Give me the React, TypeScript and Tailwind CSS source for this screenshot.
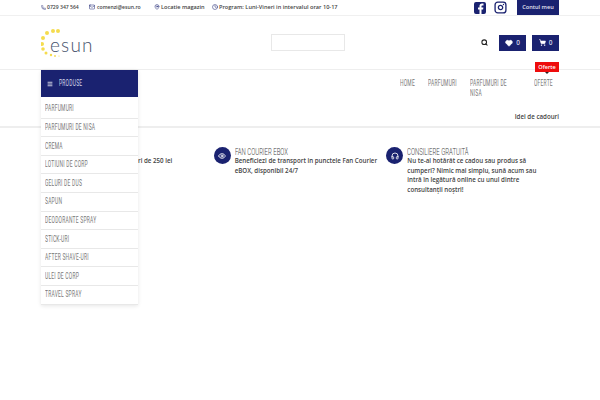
import { Search, Heart, ShoppingCart, Phone, Mail, MapPin, Clock, Menu, Eye, Headphones, Instagram } from "lucide-react";

const sidebarItems = [
  "Parfumuri",
  "Parfumuri de nisa",
  "Crema",
  "Lotiuni de corp",
  "Geluri de dus",
  "Sapun",
  "Deodorante spray",
  "Stick-uri",
  "After shave-uri",
  "Ulei de corp",
  "Travel spray",
];

// no condensed web font here, so squeeze Roboto
function Narrow({ children, title }: { children: React.ReactNode; title?: boolean }) {
  return (
    <span
      className={
        title
          ? "block origin-left scale-x-[0.63] whitespace-nowrap font-['Roboto',sans-serif] font-light uppercase"
          : "block origin-left scale-x-[0.58] whitespace-nowrap font-['Roboto',sans-serif] font-normal uppercase"
      }
    >
      {children}
    </span>
  );
}

function Logo() {
  const dots = [
    [58, 31, 2], [53, 31, 2], [47, 33, 2], [43, 38, 2], [42, 44, 2],
    [43, 49, 1.8], [46, 53, 1.5], [51, 55, 1.2], [55, 56, 0.9], [59, 56, 0.6],
  ];
  return (
    <div className="relative w-[60px] h-[34px]">
      <svg width="60" height="34" viewBox="41 26 60 34" className="absolute left-0 top-0">
        {dots.map(([x, y, r], i) => (
          <circle key={i} cx={x} cy={y} r={r} fill="#f5dc4e" />
        ))}
      </svg>
      <span className="absolute left-[9px] top-[6px] text-[19px] leading-[26px] font-light tracking-[1.2px] text-[#46526c] font-['Lato',sans-serif]">
        esun
      </span>
    </div>
  );
}

function Feature({ icon, title, children }: { icon: React.ReactNode; title: string; children: React.ReactNode }) {
  return (
    <div className="flex gap-[4px]">
      <div className="w-[17px] h-[17px] rounded-full bg-[#1a2270] flex items-center justify-center text-white shrink-0">
        {icon}
      </div>
      <div className="w-[142.5px]">
        <div className="text-[9.5px] leading-[9px] text-[#444]">
          <Narrow title>{title}</Narrow>
        </div>
        <div className="text-[6.2px] leading-[9.7px] font-semibold text-[#444]">{children}</div>
      </div>
    </div>
  );
}

export default function App() {
  return (
    <div className="relative w-[600px] h-[400px] bg-white overflow-hidden font-['Open_Sans',sans-serif]">
      {/* Top bar */}
      <div className="h-[16px] border-b border-[#f0f0f0]">
        <div className="mx-[41px] flex items-start justify-between">
          <div className="flex items-center h-[15px] text-[5.6px] font-semibold text-[#444]">
            <span className="flex items-center gap-[1px] w-[48px] text-[5.1px]"><Phone size={5} className="text-[#1a2270]" /> 0729 347 564</span>
            <span className="flex items-center gap-[2px] w-[65px] text-[5.1px]"><Mail size={6} className="text-[#1a2270]" /> comenzi@esun.ro</span>
            <span className="flex items-center gap-[1px] w-[58px]"><MapPin size={6} className="text-[#1a2270]" /> Locatie magazin</span>
            <span className="flex items-center gap-[1px]"><Clock size={6} className="text-[#1a2270]" /> Program: Luni-Vineri in intervalul orar 10-17</span>
          </div>
          <div className="flex items-start">
            <svg width="12" height="12" viewBox="0 0 24 24" className="mt-[1.500px] mr-[8px]">
              <path fill="#1a2270" d="M4 0h16a4 4 0 0 1 4 4v16a4 4 0 0 1-4 4h-5v-9h3.200l.6-4H15V8.600c0-1.100.5-1.800 1.900-1.800H19V3.200c-.6-.1-1.800-.2-3-.2-3 0-5 1.800-5 5v3H8v4h3v9H4a4 4 0 0 1-4-4V4a4 4 0 0 1 4-4z" />
            </svg>
            <Instagram size={13} strokeWidth={2.4} className="text-[#1a2270] mt-[1px] mr-[10px]" />
            <div className="w-[42px] h-[15px] bg-[#1a2270] text-[#e4e5f0] text-[5.6px] font-semibold flex items-center justify-center">Contul meu</div>
          </div>
        </div>
      </div>

      {/* Header */}
      <div className="h-[54px] border-b border-[#eeeeee]">
        <div className="mx-[41px] h-full flex items-center justify-between">
          <Logo />
          <div className="flex-1 flex items-center justify-end">
            <div className="w-[74px] h-[17px] border border-[#e8e8e8] mr-[136px]" />
            <Search size={7} strokeWidth={3.5} className="text-[#222] mr-[11px]" />
            <div className="w-[27px] h-[16px] bg-[#1a2270] text-[#d5d7e8] text-[6.5px] font-semibold flex items-center justify-center gap-[3px] mr-[6px]">
              <Heart size={8} fill="white" className="text-white" /> 0
            </div>
            <div className="w-[27px] h-[16px] bg-[#1a2270] text-[#d5d7e8] text-[6.5px] font-semibold flex items-center justify-center gap-[3px]">
              <ShoppingCart size={7} fill="white" className="text-white" /> 0
            </div>
          </div>
        </div>
      </div>

      {/* Nav */}
      <div className="h-[58px] border-b-2 border-[#eeeeee]">
        <div className="mx-[41px] relative h-full">
          <div className="flex justify-end pt-[9px] text-[8.5px] leading-[9.7px] text-[#777] tracking-[0.4px]">
            <div className="w-[28px]"><Narrow>Home</Narrow></div>
            <div className="w-[42px]"><Narrow>Parfumuri</Narrow></div>
            <div className="w-[64px]">
              <Narrow>Parfumuri de</Narrow>
              <Narrow>nisa</Narrow>
            </div>
            <div className="w-[25px]"><Narrow>Oferte</Narrow></div>
          </div>
          <div className="absolute right-0 top-[42px] text-[6.2px] leading-[9.7px] font-semibold text-[#444]">Idei de cadouri</div>
          <div className="absolute right-0 -top-[8px] w-[24px] h-[10px] bg-[#ee0c0c] text-white text-[5.6px] font-semibold flex items-center justify-center">
            Oferte
            <span className="absolute left-[10px] top-[10px] border-x-[2px] border-t-[2px] border-x-transparent border-t-[#222]" />
          </div>
        </div>
      </div>

      {/* Features */}
      <div className="mx-[41px] grid grid-cols-3 pt-[19px]">
        <div className="pl-[97px] mt-[9px]">
          <div className="whitespace-nowrap text-[6.2px] leading-[9.7px] font-semibold text-[#444]">ri de 250 lei</div>
        </div>
        <Feature icon={<Eye size={8} strokeWidth={2.5} />} title="Fan Courier eBOX">
          Beneficiezi de transport in punctele Fan Courier eBOX, disponibil 24/7
        </Feature>
        <Feature icon={<Headphones size={8} strokeWidth={2.5} />} title="Consiliere gratuită">
          Nu te-ai hotărât ce cadou sau produs să cumperi? Nimic mai simplu, sună acum sau intră în legătură online cu unul dintre consultanții noștri!
        </Feature>
      </div>

      {/* Produse dropdown, over the page */}
      <div className="absolute left-[41px] top-[70px] w-[97px] bg-white shadow-[0_1px_4px_rgba(0,0,0,0.1)]">
        <div className="h-[27px] bg-[#1a2270] text-[#d5d7e8] flex items-center pl-[6px] gap-[6px] text-[8.5px] tracking-[0.4px]">
          <Menu size={6} strokeWidth={3} className="text-white" />
          <div className="w-[40px]"><Narrow>Produse</Narrow></div>
        </div>
        <div className="pt-[3px]">
          {sidebarItems.map((item) => (
            <div key={item} className="h-[18.6px] border-b border-[#e8e8e8] pl-[4px] flex items-center text-[8.5px] tracking-[0.4px] text-[#777]">
              <div className="w-[90px]"><Narrow>{item}</Narrow></div>
            </div>
          ))}
        </div>
      </div>
    </div>
  );
}
